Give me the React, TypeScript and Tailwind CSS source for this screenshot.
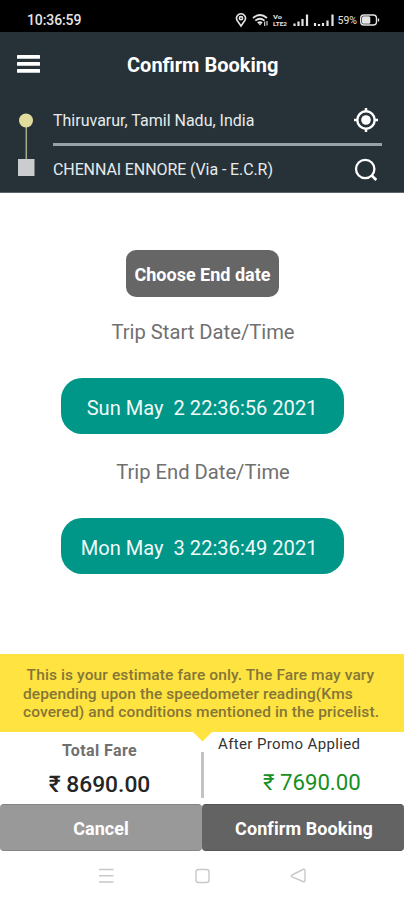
const StatusBar = () => {
  return (
    <div className="flex h-8 items-center justify-between bg-black pl-[27px] pr-[24px] pt-2 text-[#e4e4e4]">
      <span className="text-[14px] leading-none font-medium tracking-[-0.1px]">10:36:59</span>
      <svg width="146" height="16" viewBox="0 0 146 16" fill="none" stroke="currentColor">
        {/* location pin */}
        <path d="M7 14 L3.2 8.5 A4.4 4.4 0 1 1 10.8 8.5 Z" strokeWidth="1.6" />
        <circle cx="7" cy="6.2" r="1.6" strokeWidth="1.6" />
        {/* wifi */}
        <path d="M19 6 Q26 0 33 6 M21.3 8.7 Q26 4.8 30.5 8.7 M23.7 11 Q26 9.2 28 11" strokeWidth="1.7" />
        <path d="M26 13.5 L24.3 11.3 H27.7 Z" fill="currentColor" stroke="none" />
        <path d="M30.7 9.5 V14 M33 9 V13.5" strokeWidth="1.1" />
        <g fill="currentColor" stroke="none" className="text-[6px] font-bold">
          <text x="39" y="6.5" textLength="9" lengthAdjust="spacingAndGlyphs">Vo</text>
          <text x="39" y="14" textLength="14" lengthAdjust="spacingAndGlyphs">LTE2</text>
        </g>
        {/* signal bars */}
        <path d="M60.5 14 V11.5 M64.5 14 V9.5 M68.5 14 V7 M73 14 V2.5" strokeWidth="2.2" />
        <path d="M81 14 V11 M85 14 V12 M89 14 V11 M93.5 14 V8.5 M98.5 14 V2.5" strokeWidth="2.2" />
        <text x="103.5" y="12" textLength="19.5" lengthAdjust="spacingAndGlyphs" fill="currentColor" stroke="none" className="text-[10.5px]">59%</text>
        <rect x="126.7" y="3" width="15.8" height="10" rx="3.2" strokeWidth="1.4" />
        <rect x="128" y="4.2" width="8.3" height="7.6" rx="1.5" fill="currentColor" stroke="none" />
        <path d="M144.5 6.5 V9.5" strokeWidth="1.3" />
      </svg>
    </div>
  );
};

const Header = () => {
  return (
    <header className="h-[161px] border-b border-[#59656a] bg-[#263238] text-white">
      <div className="flex h-[66px] items-center pl-[17px]">
        <svg className="mb-[2px]" width="23" height="18" viewBox="0 0 23 18" fill="#fff">
          <rect width="23" height="3.8" rx="0.5" />
          <rect y="7" width="23" height="3.8" rx="0.5" />
          <rect y="14" width="23" height="3.8" rx="0.5" />
        </svg>
        <h1 className="ml-[87px] text-[20px] font-bold">Confirm Booking</h1>
      </div>
      <div className="flex">
        <svg width="53" height="94" viewBox="0 0 53 94">
          <path d="M26.3 22 V61" stroke="#a7ad87" strokeWidth="1.5" />
          <circle cx="26" cy="22.5" r="7" fill="#e2dc9d" />
          <rect x="18" y="61" width="16.5" height="17" fill="#cbcccd" />
        </svg>
        <div className="w-[329px] text-[16px] text-[#e6ebed]">
          <div className="flex h-[45px] items-center justify-between">
            <span>Thiruvarur, Tamil Nadu, India</span>
            <svg className="mr-[3px] mb-[2px]" width="26" height="26" viewBox="0 0 26 26" fill="none" stroke="#fff">
              <circle cx="13" cy="13" r="8.7" strokeWidth="2.4" />
              <circle cx="13" cy="13" r="4.8" fill="#fff" stroke="none" />
              <path d="M13 1 V5 M13 21 V25 M1 13 H5 M21 13 H25" strokeWidth="2.5" />
            </svg>
          </div>
          <div className="h-[3px] bg-[#98a1a5]" />
          <div className="flex h-[48px] items-center justify-between">
            <span className="tracking-[-0.1px]">CHENNAI ENNORE (Via - E.C.R)</span>
            <svg className="mr-[3px]" width="26" height="26" viewBox="0 0 26 26" fill="none" stroke="#fff" strokeWidth="2.3">
              <circle cx="12.2" cy="12" r="9.2" />
              <path d="M18.5 18.3 L23.3 23" strokeWidth="2.7" />
            </svg>
          </div>
        </div>
      </div>
    </header>
  );
};

const DatePill = ({ text }: { text: string }) => {
  return (
    <button className="flex h-14 w-[283px] items-center justify-end rounded-[21px] bg-[#009688] pt-1 pr-[26px] text-[20.1px] whitespace-pre text-[#f0faf8]">
      {text}
    </button>
  );
};

const App = () => {
  return (
    <div className="flex h-[900px] w-[404px] flex-col overflow-hidden bg-white font-['Roboto',sans-serif]">
      <StatusBar />
      <Header />

      <main className="flex h-[461px] flex-col items-center pt-[57px] text-[20px] text-[#707070]">
        <button className="ml-px h-[47px] w-[153px] rounded-[10px] bg-[#666] pt-px text-[18px] font-bold text-white">
          Choose End date
        </button>
        <p className="mt-[20px] ml-[2px] h-[30px] text-[20.2px] leading-[30px]">Trip Start Date/Time</p>
        <div className="mt-[31px] h-14">
          <DatePill text="Sun May  2 22:36:56 2021" />
        </div>
        <p className="mt-[23px] ml-[2px] h-[30px] text-[20.2px] leading-[30px]">Trip End Date/Time</p>
        <div className="mt-[31px] h-14">
          <DatePill text="Mon May  3 22:36:49 2021" />
        </div>
      </main>

      <div className="relative h-[78px] bg-[#ffe340] pt-[12px] pl-[23px] text-[15.5px] leading-[18.5px] font-medium tracking-[0.11px] whitespace-nowrap text-[#857638]">
        <p className="whitespace-pre">{" This is your estimate fare only. The Fare may vary"}</p>
        <p>depending upon the speedometer reading(Kms</p>
        <p>covered) and conditions mentioned in the pricelist.</p>
        <svg className="absolute top-[77.5px] left-[193px]" width="19" height="10" viewBox="0 0 19 10">
          <path d="M0 0 H19 L9.5 9.5 Z" fill="#ffe340" />
        </svg>
      </div>

      <section className="flex h-[72px]">
        <div className="flex w-[201px] flex-col items-center pt-[8px] pr-[2px]">
          <span className="text-[16px] leading-[22px] font-bold tracking-[0.4px] text-[#707070]">Total Fare</span>
          <span className="mt-[9px] text-[22.8px] leading-[28px] font-medium text-[#252525]">₹ 8690.00</span>
        </div>
        <div className="mt-[20px] h-[46px] w-[3px] bg-[#c2c2c2]" />
        <div className="flex flex-1 flex-col pl-[14px]">
          <span className="text-[15px] leading-[24px] tracking-[0.37px] text-[#333]">After Promo Applied</span>
          <span className="mt-[12px] ml-[45px] text-[22.2px] leading-[28px] text-[#159022]">₹ 7690.00</span>
        </div>
      </section>

      <div className="flex h-[47px] text-[18px] font-bold text-white">
        <button className="w-[202px] rounded-[4px] border-y border-[#858585] bg-[#999] pt-[2px]">Cancel</button>
        <button className="w-[202px] rounded-[4px] border-y border-[#555] bg-[#636363] pt-[2px] pl-[2px] tracking-[0.1px]">Confirm Booking</button>
      </div>

      <nav className="flex h-[49px] pt-[16px] pl-[98px]">
        <svg width="210" height="18" viewBox="0 0 210 18" fill="none" stroke="#c8c8c8" strokeWidth="1.4">
          <path d="M1 2.5 H15.5 M1 8.7 H15.5 M1 15 H15.5" />
          <rect x="98" y="2.5" width="13" height="13" rx="2.5" />
          <path d="M194 8 L205 2.5 Q207 1.8 207 3.5 V13.5 Q207 15.3 205 14.5 L194 9.8 Q192.3 8.9 194 8 Z" />
        </svg>
      </nav>
    </div>
  );
};

export default App;
